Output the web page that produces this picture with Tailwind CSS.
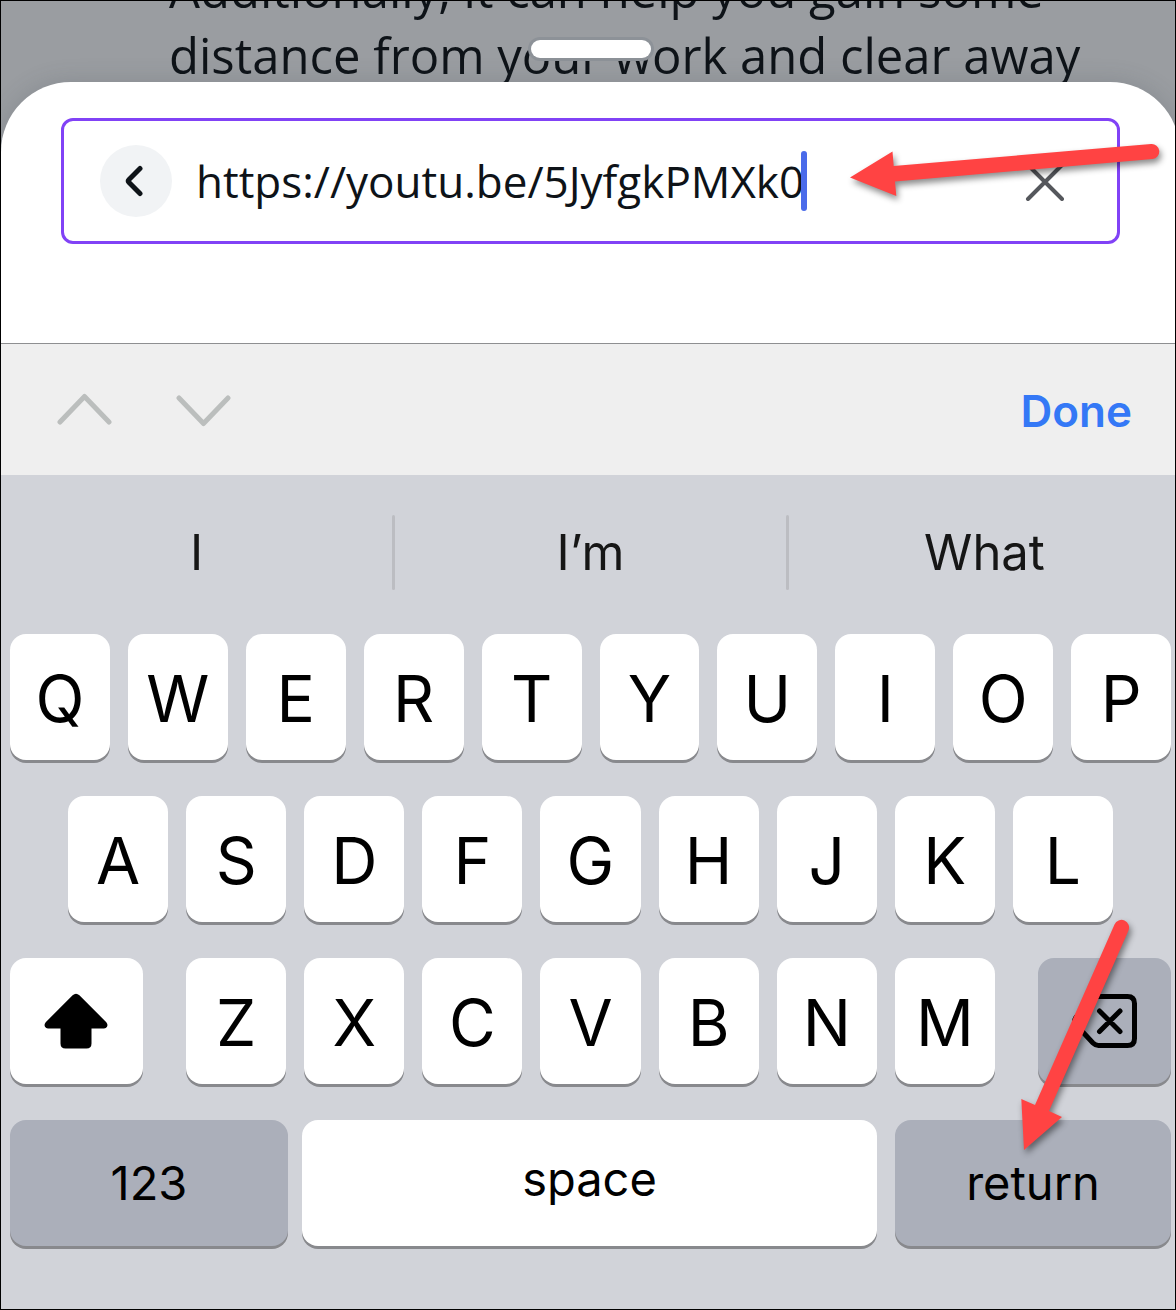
<!DOCTYPE html>
<html lang="en">
<head>
    <meta charset="UTF-8">
    <meta name="viewport" content="width=device-width, initial-scale=1.0">
    <title>Paste link</title>
    <script src="https://cdn.jsdelivr.net/npm/@tailwindcss/browser@4"></script>
</head>
<body class="bg-[#d1d3d9] font-['Inter',sans-serif] text-black">
    <div class="relative min-h-screen overflow-hidden border border-black">
        <!-- the phone screen runs slightly past the right edge of the frame -->
        <div class="-mr-[5px] flex flex-col">

            <!-- dimmed page and link sheet -->
            <div class="relative overflow-hidden bg-[#9a9da1]">
                <p class="-mt-[45px] pl-[168px] font-['Open_Sans',sans-serif] text-[49px] leading-[66px] whitespace-nowrap text-[#0e1318]">Additionally, it can help you gain some<br>distance from your work and clear away</p>
                <div class="absolute top-[39px] left-1/2 h-[18px] w-[120px] -translate-x-1/2 rounded-full bg-white ring-3 ring-[#8d9298]"></div>

                <main class="relative -mt-[6px] rounded-t-[70px] bg-white px-[60px] pt-9 pb-[99px] shadow-[0_0_24px_rgba(60,70,80,0.2)]">
                    <form class="flex h-[126px] items-center rounded-xl border-3 border-[#8142f6] pr-[52px] pl-9">
                        <button type="button" aria-label="Back" class="flex size-[72px] shrink-0 items-center justify-center rounded-full bg-[#f1f3f5]">
                            <svg class="mr-1" width="18" height="32" viewBox="0 0 18 32" fill="none" stroke="#0e1318" stroke-width="5" stroke-linecap="round" stroke-linejoin="round"><path d="M15 3.5 3.8 14.7Q2.5 16 3.8 17.3L15 28.5"/></svg>
                        </button>
                        <input type="text" aria-label="Link" value="https://youtu.be/5JyfgkPMXk0" class="ml-6 field-sizing-content font-['Open_Sans',sans-serif] text-[44px] leading-[60px] text-[#0e1318] outline-none">
                        <span class="-ml-[3px] h-[60px] w-[6px] shrink-0 rounded-full bg-[#4a6bea]"></span>
                        <button type="button" aria-label="Clear" class="ml-auto shrink-0">
                            <svg width="40" height="40" viewBox="0 0 40 40" fill="none" stroke="#55575c" stroke-width="4" stroke-linecap="round"><path d="M3 38 37 4M3 4l34 34"/></svg>
                        </button>
                    </form>
                </main>
            </div>

            <!-- form assistant bar -->
            <div class="flex h-[132px] items-center border-t border-[#8e8f91] bg-[#efefef] pr-12 pl-14">
                <button type="button" aria-label="Previous field">
                    <svg width="56" height="34" viewBox="0 0 56 34" fill="none" stroke="#bbbebd" stroke-width="5" stroke-linecap="round" stroke-linejoin="round"><path d="M3 29 27.500 3.500 52 29"/></svg>
                </button>
                <button type="button" aria-label="Next field" class="ml-[63px]">
                    <svg width="56" height="34" viewBox="0 0 56 34" fill="none" stroke="#bbbebd" stroke-width="5" stroke-linecap="round" stroke-linejoin="round"><path d="M3 5 27.500 30.500 52 5"/></svg>
                </button>
                <button type="button" class="ml-auto pt-0.5 text-[44px] leading-[60px] font-semibold text-[#3478f6]">Done</button>
            </div>

            <!-- keyboard -->
            <div class="bg-[#d1d3d9] px-[9px] pb-[63px]">
                <div class="-mx-[9px] mb-1 flex h-[155px] items-center text-[49px] text-[#161616]">
                    <button type="button" class="flex-1">I</button>
                    <span class="h-[75px] w-[3px] rounded-full bg-[#bcbdc2]"></span>
                    <button type="button" class="flex-1">I’m</button>
                    <span class="h-[75px] w-[3px] rounded-full bg-[#bcbdc2]"></span>
                    <button type="button" class="flex-1">What</button>
                </div>

                <div class="flex flex-col gap-9 text-[64px]">
                    <div class="flex gap-[18px]">
                        <button type="button" class="h-[126px] flex-1 rounded-2xl bg-white pt-1 shadow-[0_3px_0_#88898d]">Q</button>
                        <button type="button" class="h-[126px] flex-1 rounded-2xl bg-white pt-1 shadow-[0_3px_0_#88898d]">W</button>
                        <button type="button" class="h-[126px] flex-1 rounded-2xl bg-white pt-1 shadow-[0_3px_0_#88898d]">E</button>
                        <button type="button" class="h-[126px] flex-1 rounded-2xl bg-white pt-1 shadow-[0_3px_0_#88898d]">R</button>
                        <button type="button" class="h-[126px] flex-1 rounded-2xl bg-white pt-1 shadow-[0_3px_0_#88898d]">T</button>
                        <button type="button" class="h-[126px] flex-1 rounded-2xl bg-white pt-1 shadow-[0_3px_0_#88898d]">Y</button>
                        <button type="button" class="h-[126px] flex-1 rounded-2xl bg-white pt-1 shadow-[0_3px_0_#88898d]">U</button>
                        <button type="button" class="h-[126px] flex-1 rounded-2xl bg-white pt-1 shadow-[0_3px_0_#88898d]">I</button>
                        <button type="button" class="h-[126px] flex-1 rounded-2xl bg-white pt-1 shadow-[0_3px_0_#88898d]">O</button>
                        <button type="button" class="h-[126px] flex-1 rounded-2xl bg-white pt-1 shadow-[0_3px_0_#88898d]">P</button>
                    </div>

                    <div class="flex gap-[18px] px-[58px]">
                        <button type="button" class="h-[126px] flex-1 rounded-2xl bg-white pt-1 shadow-[0_3px_0_#88898d]">A</button>
                        <button type="button" class="h-[126px] flex-1 rounded-2xl bg-white pt-1 shadow-[0_3px_0_#88898d]">S</button>
                        <button type="button" class="h-[126px] flex-1 rounded-2xl bg-white pt-1 shadow-[0_3px_0_#88898d]">D</button>
                        <button type="button" class="h-[126px] flex-1 rounded-2xl bg-white pt-1 shadow-[0_3px_0_#88898d]">F</button>
                        <button type="button" class="h-[126px] flex-1 rounded-2xl bg-white pt-1 shadow-[0_3px_0_#88898d]">G</button>
                        <button type="button" class="h-[126px] flex-1 rounded-2xl bg-white pt-1 shadow-[0_3px_0_#88898d]">H</button>
                        <button type="button" class="h-[126px] flex-1 rounded-2xl bg-white pt-1 shadow-[0_3px_0_#88898d]">J</button>
                        <button type="button" class="h-[126px] flex-1 rounded-2xl bg-white pt-1 shadow-[0_3px_0_#88898d]">K</button>
                        <button type="button" class="h-[126px] flex-1 rounded-2xl bg-white pt-1 shadow-[0_3px_0_#88898d]">L</button>
                    </div>

                    <div class="flex gap-[43px]">
                        <button type="button" aria-label="Shift" class="flex h-[126px] w-[133px] items-center justify-center rounded-2xl bg-white pr-0.5 shadow-[0_3px_0_#88898d]">
                            <svg width="64" height="56" viewBox="0 0 64 56" fill="#000"><path d="M28.6 2.3Q32 -.9 35.4 2.3L62.3 29.2Q64.2 31.5 63 33.7 62.200 35.500 60 35.500H47.500V50.500Q47.500 55.500 42.500 55.500H21.500Q16.500 55.500 16.500 50.500V35.500H4Q1.800 35.500 1 33.700 -.2 31.500 1.700 29.200Z"/></svg>
                        </button>
                        <div class="flex flex-1 gap-[18px]">
                            <button type="button" class="h-[126px] flex-1 rounded-2xl bg-white pt-1 shadow-[0_3px_0_#88898d]">Z</button>
                            <button type="button" class="h-[126px] flex-1 rounded-2xl bg-white pt-1 shadow-[0_3px_0_#88898d]">X</button>
                            <button type="button" class="h-[126px] flex-1 rounded-2xl bg-white pt-1 shadow-[0_3px_0_#88898d]">C</button>
                            <button type="button" class="h-[126px] flex-1 rounded-2xl bg-white pt-1 shadow-[0_3px_0_#88898d]">V</button>
                            <button type="button" class="h-[126px] flex-1 rounded-2xl bg-white pt-1 shadow-[0_3px_0_#88898d]">B</button>
                            <button type="button" class="h-[126px] flex-1 rounded-2xl bg-white pt-1 shadow-[0_3px_0_#88898d]">N</button>
                            <button type="button" class="h-[126px] flex-1 rounded-2xl bg-white pt-1 shadow-[0_3px_0_#88898d]">M</button>
                        </div>
                        <button type="button" aria-label="Delete" class="flex h-[126px] w-[133px] items-center justify-center rounded-2xl bg-[#abafba] shadow-[0_3px_0_#88898d]">
                            <svg width="66" height="54" viewBox="0 0 66 54" fill="none" stroke="#000" stroke-width="5" stroke-linecap="round" stroke-linejoin="round"><path d="M26.500 2.500H55.500Q62.500 2.500 62.500 9.500V44.500Q62.500 51.500 55.500 51.500H26.500Q23.500 51.500 21 49L3.800 30.500Q1.500 27 3.800 23.500L21 5Q23.500 2.500 26.500 2.500ZM27.500 17 48 37.500M48 17 27.500 37.500"/></svg>
                        </button>
                    </div>

                    <div class="flex gap-[14px] text-[47px]">
                        <button type="button" class="h-[126px] flex-[278] rounded-2xl bg-[#abafba] shadow-[0_3px_0_#88898d]">123</button>
                        <button type="button" class="h-[126px] flex-[575] rounded-2xl bg-white pb-2 shadow-[0_3px_0_#88898d]">space</button>
                        <button type="button" class="ml-1 h-[126px] flex-[276] rounded-2xl bg-[#abafba] shadow-[0_3px_0_#88898d]">return</button>
                    </div>
                </div>
            </div>
        </div>

        <!-- arrow to the link field -->
        <svg class="pointer-events-none absolute top-[139px] right-0 drop-shadow-[2px_4px_3px_rgba(0,0,0,0.45)]" width="335" height="70" viewBox="840 140 335 70" fill="#ff4343">
            <path d="M850 177.500 892.500 151.500 893.700 166 1151 144A7.500 7.500 0 0 1 1152.500 159L895 181.500 896.300 196Z"/>
        </svg>
        <!-- arrow to the return key -->
        <svg class="pointer-events-none absolute top-[909px] right-0 drop-shadow-[2px_4px_3px_rgba(0,0,0,0.45)]" width="165" height="260" viewBox="1010 910 165 260" fill="#ff4343">
            <path d="M1024 1150 1021.300 1099 1035 1105 1114.500 924.500A7.500 7.500 0 0 1 1128.500 930.500L1049 1111 1062 1117Z"/>
        </svg>
    </div>
</body>
</html>
